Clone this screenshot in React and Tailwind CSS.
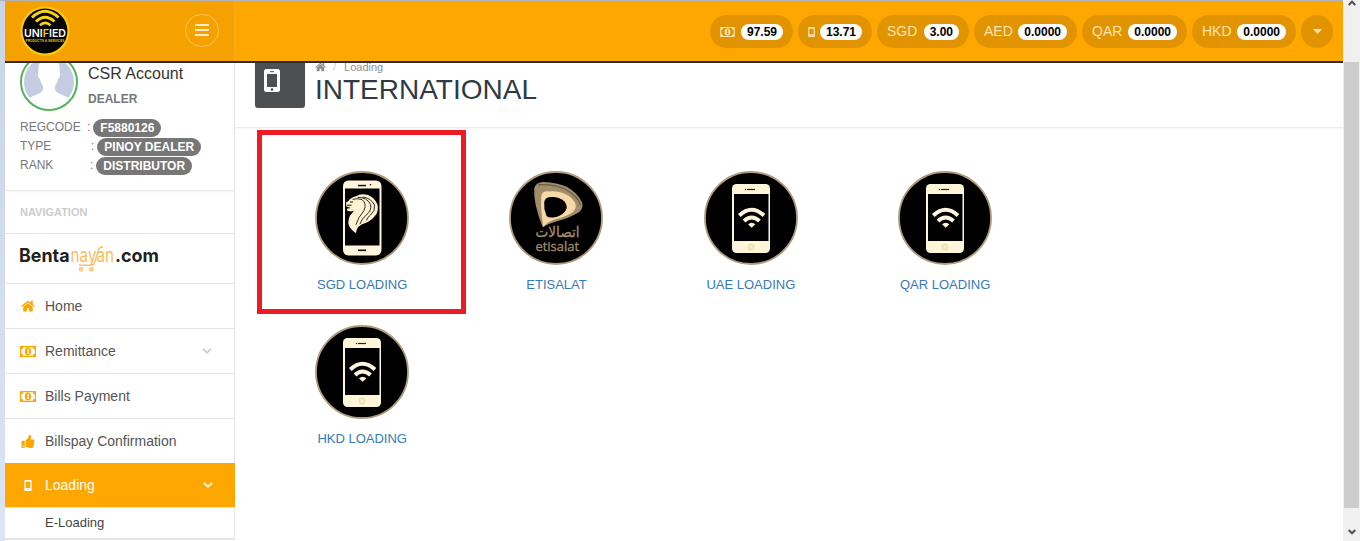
import React from "react";
import { FaThumbsUp } from "react-icons/fa";

const HomeIcon = ({ className }) => (
  <svg viewBox="50 180 1692 1400" className={className} fill="currentColor">
    <path d="M1472 992v480q0 26-19 45t-45 19h-384v-384h-256v384h-384q-26 0-45-19t-19-45v-480q0-1 .5-3t.5-3l575-474 575 474q1 2 1 6zm223-69l-62 74q-8 9-21 11h-3q-13 0-21-7l-692-577-692 577q-12 8-24 7-13-2-21-11l-62-74q-8-10-7-23.5t11-21.5l719-599q32-26 76-26t76 26l244 204v-195q0-14 9-23t23-9h192q14 0 23 9t9 23v408l219 182q10 8 11 21.5t-7 23.5z" />
  </svg>
);

const MoneyIcon = ({ className, digit = "fill-white" }) => (
  <svg viewBox="0 0 16 11" className={className} fill="currentColor">
    <path
      fillRule="evenodd"
      d="M.5 0h15q.5 0 .5.5v10q0 .5-.5.5h-15q-.5 0-.5-.5v-10q0-.5.5-.5ZM3.300 1.200Q3.200 3.200 1.200 3.300v4.400q2 .1 2.100 2.100h9.400q.1-2 2.100-2.100V3.300q-2-.1-2.100-2.100Z"
    />
    <ellipse cx="8" cy="5.500" rx="3.200" ry="3.900" />
    <path d="M7 4 8 3.100h.8v3.800h.7v.8H6.700v-.8h1V4.600l-.5.300Z" className={digit} />
  </svg>
);

const PhoneIcon = ({ className }) => (
  <svg viewBox="0 0 8 12" className={className} fill="currentColor">
    <path
      fillRule="evenodd"
      d="M1 0h6Q8 0 8 1v10Q8 12 7 12H1Q0 12 0 11V1Q0 0 1 0ZM1.500 2v6.800h5V2ZM4 9.800a.6.6 0 1 0 0 1.200.6.6 0 1 0 0-1.200Z"
    />
  </svg>
);

const Chevron = ({ className }) => (
  <svg viewBox="0 0 10 6" className={className} fill="none" stroke="currentColor" strokeWidth="1.700">
    <path d="M1 .8 5 4.800 9 .8" />
  </svg>
);

const UnifiedLogo = () => (
  <svg viewBox="0 0 50 50" className="h-[50px] w-[50px]">
    <circle cx="25" cy="25" r="23.500" fill="#050505" stroke="#fbc80a" strokeWidth="2.200" />
    <g fill="none" stroke="#fbd50f" strokeWidth="2.700">
      <path d="M12 11.500Q25-1 38.500 11.500" />
      <path d="M16 15.500Q25 7 34.500 15.500" />
      <path d="M20 19.200Q25 14.700 30.500 19.200" />
    </g>
    <text x="4" y="31.300" fontFamily="Inter, sans-serif" fontSize="10.500" fontWeight="600" fill="#fff" textLength="42" lengthAdjust="spacingAndGlyphs">
      UNI<tspan fill="#fbc80a">F</tspan>IED
    </text>
    <text x="5.500" y="35.700" fontFamily="Liberation Sans, sans-serif" fontSize="4.400" fontWeight="700" fill="#f0c20a" textLength="39" lengthAdjust="spacingAndGlyphs">
      PRODUCTS &amp; SERVICES
    </text>
  </svg>
);

const Avatar = () => (
  <div className="h-[58px] w-[58px] shrink-0 overflow-hidden rounded-full border-2 border-[#53b35b] bg-white p-[2px]">
    <svg viewBox="0 0 50 50" className="h-full w-full rounded-full">
      <rect width="50" height="50" fill="#c3cce0" />
      <path
        fill="#fff"
        d="M25 2C16 2 13.500 8 14.500 15c-1.500 1-.5 6 1.500 7 .8 4 2 5.500 3 7 .5 4-.5 6-4 7.500C9 39 6 40 3 44v6h44v-6c-3-4-6-5-12-7.500-3.500-1.500-4.500-3.500-4-7.500 1-1.500 2.200-3 3-7 2-1 3-6 1.500-7C36.500 8 34 2 25 2Z"
      />
    </svg>
  </div>
);

const BentanayanLogo = () => (
  <svg viewBox="0 0 142 30" className="h-[30px] w-[142px]">
    <g fontFamily="Inter, sans-serif" fontSize="18.500">
      <text x="0" y="19" fontWeight="700" fill="#231f20" textLength="50.500" lengthAdjust="spacingAndGlyphs">Benta</text>
      <text x="51.500" y="19" fill="#fbbd5c" textLength="43.500" lengthAdjust="spacingAndGlyphs">nayan</text>
      <text x="96" y="19" fontWeight="700" fill="#231f20" textLength="44" lengthAdjust="spacingAndGlyphs">.com</text>
    </g>
    <g fill="none" stroke="#fbc36a" strokeWidth="1.500">
      <path d="M60 22.300h12q3 0 3.600-2.500L79.500 7Q80.500 3.500 84 3.700" />
      <circle cx="62" cy="26.300" r="1.500" />
      <circle cx="72.500" cy="26.300" r="1.500" />
    </g>
  </svg>
);

const Disc = ({ children }) => (
  <svg viewBox="0 0 94 94" className="h-[94px] w-[94px]">
    <circle cx="47" cy="47" r="46" fill="#000" stroke="#ad9b7c" strokeWidth="1.800" />
    {children}
  </svg>
);

const LionPhone = () => (
  <Disc>
    <rect x="28" y="9.500" width="38.500" height="75" rx="5.500" fill="#fff5dc" />
    <rect x="30" y="17.500" width="34.500" height="57" fill="#000" />
    <rect x="43" y="13.800" width="8" height="1.500" fill="#111" />
    <circle cx="55.500" cy="13.800" r=".8" fill="#111" />
    <rect x="43" y="78.500" width="8" height="1.600" fill="#111" />
    <path
      fill="#fff3d4"
      d="M31 31.500 33.500 30l1.500-2 3.500-2 3-1q3.500-2 7-1.700 5 .3 8.200 2.700 4.500 3.500 6 8.500.6 5-1 8-3.700 6-10 9-5 1.500-8.400 4.200Q41.500 58 41 62.300 33.500 57 33.300 52q0-4 1.500-7 2.500-3 4.200-5.500l-3 1-3.700-.8-.5-2 4-.8-4.500-1.500Z"
    />
    <g fill="none" stroke="#17130d" strokeWidth=".9" strokeLinecap="round">
      <path d="M38 28.300q4-1.300 9 .2 5 4 2 11-6 7-8 14" />
      <path d="M43 26.300q9 0 12.500 7 1.500 6-4 10.500-5 4-6.500 9" />
      <path d="M48 26q8 1 11.500 8 1 6-4 10-3 2-4 5" />
    </g>
    <path d="M32 34.300h4.500M35 31h3" stroke="#17130d" strokeWidth="1.100" />
  </Disc>
);

const WifiPhone = () => (
  <Disc>
    <rect x="28" y="13" width="38" height="69" rx="4.500" fill="#fff5d8" />
    <rect x="30" y="23" width="34.500" height="47" fill="#000" />
    <path d="M43 18.500h8" stroke="#222" strokeWidth="1.200" />
    <circle cx="41.500" cy="18.500" r=".7" fill="#222" />
    <circle cx="47" cy="76" r="3" fill="none" stroke="#ead7a4" strokeWidth="1" />
    <rect x="45.700" y="74.700" width="2.600" height="2.600" rx=".5" fill="none" stroke="#ead7a4" strokeWidth=".7" />
    <g fill="none" stroke="#fff5dc" strokeWidth="3.900">
      <path d="M35.300 44.500Q47.500 33 60 44.500" />
      <path d="M40 50Q47.500 43 55.500 50" />
    </g>
    <path fill="#fff5dc" d="M44 53.300q3.700-3 7.400 0L47.700 56.800Z" />
  </Disc>
);

const Etisalat = () => (
  <Disc>
    <path fill="#a18d6a" d="M25.300 17Q27 11 34.500 11 48 11.500 58 16 69 22 73.300 32q1.500 7-5.600 10.500-8 4.500-19 7.500-9 2.500-15 6.300Q24 32 25.300 17Z" />
    <path fill="none" stroke="#6b5d43" strokeWidth="1.200" d="M29 13.800Q46 13 57.500 19 69 25.500 71.500 34" />
    <path fill="#f5d9a7" d="M32.500 24q1-4 7-3.600Q52 19.500 60 25q7.500 6 6.800 11-1 4.500-6 7-6 3.500-14.800 5.500-7 2-11.700 7.200Q31 35 32.500 24Z" />
    <path fill="#000" d="M35.200 31q1-4.800 6.300-5 9-.6 14 4.500 3.500 4.500 1.500 8.500-4 6.500-13 7.500-4.500.3-6.500-1.500Q34.500 38 35.200 31Z" />
    <text x="48.500" y="65.500" textAnchor="middle" direction="rtl" fontFamily="DejaVu Sans, sans-serif" fontSize="14" fill="#a18d6a" stroke="#a18d6a" strokeWidth=".3" textLength="44" lengthAdjust="spacingAndGlyphs">اتصالات</text>
    <text x="26.500" y="80.300" fontFamily="Open Sans, sans-serif" fontSize="12.500" fontWeight="500" fill="#a18d6a" stroke="#a18d6a" strokeWidth=".3" textLength="43.500" lengthAdjust="spacingAndGlyphs">etisalat</text>
  </Disc>
);

const Pill = ({ label, value, className }) => (
  <div className={`flex h-[33px] items-center justify-between rounded-full bg-[#e29400] px-[10px] text-[14px] text-[#fce3b1] ${className}`}>
    <span>{label}</span>
    <span className="flex h-4 items-center rounded-full bg-white px-[6px] text-[12px] font-bold leading-none text-black">{value}</span>
  </div>
);

const InfoRow = ({ label, value, className }) => (
  <div className="flex h-[19px] items-start text-[12px] leading-[17px] text-[#777]">
    <span className={className}>{label}</span>
    <span>:</span>
    <span className="ml-[3px] h-[18px] rounded-full bg-[#777] px-[7px] font-bold leading-[18px] text-white">{value}</span>
  </div>
);

const NavItem = ({ icon, label, open }) => (
  <div className="flex h-[45px] shrink-0 items-center border-b border-r border-[#e3e5e7] pl-[15px] pr-[22px] text-[14px] text-[#555]">
    <span className="flex w-[25px] text-[#fca600]">{icon}</span>
    <span className="flex-1">{label}</span>
    {open && <Chevron className="h-[6px] w-[10px] text-[#ccc]" />}
  </div>
);

const Tile = ({ icon, label }) => (
  <div className="flex h-[154px] flex-col items-center text-[13px] text-[#337ab7]">
    {icon}
    <span className="mt-[10px] leading-5">{label}</span>
  </div>
);

export default function App() {
  return (
    <div className="flex h-[541px] w-[1360px] overflow-hidden bg-white font-['Liberation_Sans',Arial,sans-serif]">
      <div className="w-[5px] shrink-0 border-t border-[#b3b3b3] bg-linear-to-b from-[#c9d4e7] to-[#dbe5f3]" />

      <div className="flex w-[1338px] shrink-0 flex-col">
        <header className="flex h-[63px] shrink-0 border-b-2 border-t border-b-[#2d2d2d] border-t-[#b3b3b3] bg-[#fda700]">
          <div className="flex w-[230px] items-start justify-between border-r border-[#f9ad1c] bg-[#f5a200] pl-[15px] pr-[15px] pt-[5px]">
            <UnifiedLogo />
            <div className="mt-[8px] flex h-[33px] w-[34px] flex-col items-center justify-center gap-[3px] rounded-full border border-[#fac25a] pb-[2px]">
              <span className="h-[2px] w-[14px] bg-[#fdebc9]" />
              <span className="h-[2px] w-[14px] bg-[#fdebc9]" />
              <span className="h-[2px] w-[14px] bg-[#fdebc9]" />
            </div>
          </div>
          <div className="flex flex-1 justify-end gap-[5px] pr-[10px] pt-[14px]">
            <Pill className="w-[83px]" label={<MoneyIcon className="h-[10px] w-[15px]" digit="fill-[#e29400]" />} value="97.59" />
            <Pill className="w-[74px]" label={<PhoneIcon className="h-[10px] w-[7px]" />} value="13.71" />
            <Pill className="w-[92px]" label="SGD" value="3.00" />
            <Pill className="w-[103px]" label="AED" value="0.0000" />
            <Pill className="w-[105px]" label="QAR" value="0.0000" />
            <Pill className="w-[104px]" label="HKD" value="0.0000" />
            <div className="flex h-[33px] w-[32px] items-center justify-center rounded-full bg-[#e29400]">
              <svg viewBox="0 0 9 5" className="h-[5px] w-[9px]" fill="#fce3b1">
                <path d="M0 0h9L4.500 5Z" />
              </svg>
            </div>
          </div>
        </header>

        <div className="flex min-h-0 flex-1">
          <aside className="flex w-[230px] shrink-0 flex-col">
            <div className="h-[128px] shrink-0 overflow-hidden border-b border-r border-[#e6e8ea] pl-[15px] shadow-[0_1px_2px_rgba(0,0,0,0.04)]">
              <div className="-mt-[10px] flex h-[65px]">
                <Avatar />
                <div className="ml-[10px] pt-[11px]">
                  <div className="text-[16px] leading-5 text-[#333]">CSR Account</div>
                  <div className="mt-[7px] text-[12px] font-bold leading-4 text-[#777]">DEALER</div>
                </div>
              </div>
              <div className="pt-[1px]">
                <InfoRow className="w-[67px]" label="REGCODE" value="F5880126" />
                <InfoRow className="w-[71px]" label="TYPE" value="PINOY DEALER" />
                <InfoRow className="w-[70px]" label="RANK" value="DISTRIBUTOR" />
              </div>
            </div>
            <div className="flex h-[43px] shrink-0 items-center border-b border-r border-[#e3e5e7] pl-[15px] text-[11px] font-bold text-[#ccc]">NAVIGATION</div>
            <div className="flex h-[50px] shrink-0 items-start border-b border-r border-[#e3e5e7] pl-[14px] pt-[9px]">
              <BentanayanLogo />
            </div>
            <NavItem icon={<HomeIcon className="ml-px h-[12px] w-[14px]" />} label="Home" />
            <NavItem icon={<MoneyIcon className="h-[11px] w-[16px]" />} label="Remittance" open />
            <NavItem icon={<MoneyIcon className="h-[11px] w-[16px]" />} label="Bills Payment" />
            <NavItem icon={<FaThumbsUp className="ml-px h-[13px] w-[14px]" />} label="Billspay Confirmation" />
            <div className="-mt-px flex h-[44px] w-[230px] shrink-0 items-center bg-[#fda700] pl-[15px] pr-[22px] text-[14px] text-white">
              <span className="flex w-[25px] pl-[4px]">
                <PhoneIcon className="h-[11px] w-[8px]" />
              </span>
              <span className="flex-1">Loading</span>
              <Chevron className="h-[6px] w-[10px]" />
            </div>
            <div className="flex h-[33px] shrink-0 items-center border-b-2 border-r border-t border-b-[#e1e5e9] border-r-[#e3e5e7] border-t-[#e3e5e7] pl-[40px] text-[13px] text-[#444]">E-Loading</div>
          </aside>

          <main className="relative flex-1">
            <div className="flex h-[65px] border-b border-[#ececec] pl-[20px] shadow-[0_1px_2px_rgba(0,0,0,0.04)]">
              <div className="flex h-[45px] w-[50px] rounded-b-[3px] bg-[#4c5052] pl-[9px] pt-[6px]">
                <svg viewBox="0 0 16 23" className="h-[23px] w-[16px]">
                  <rect width="16" height="23" rx="2.500" fill="#fff" />
                  <rect x="3" y="5" width="10" height="13" fill="#4c5052" />
                  <path d="M6 2.700h4" stroke="#4c5052" />
                  <circle cx="8" cy="20.500" r="1.300" fill="#4c5052" />
                </svg>
              </div>
              <div className="ml-[10px]">
                <div className="-mt-[3px] flex h-[14px] items-center text-[11px] leading-[14px] text-[#8e8e8e]">
                  <HomeIcon className="h-[10px] w-[11px]" />
                  <span className="ml-[7px] text-[#ccc]">/</span>
                  <span className="ml-[8px]">Loading</span>
                </div>
                <h1 className="text-[28px] leading-[32px] text-[#2f3a43]">INTERNATIONAL</h1>
              </div>
            </div>
            <div className="grid grid-cols-[repeat(4,194.33px)] pl-[30px] pt-[43px]">
              <Tile icon={<LionPhone />} label="SGD LOADING" />
              <Tile icon={<Etisalat />} label="ETISALAT" />
              <Tile icon={<WifiPhone />} label="UAE LOADING" />
              <Tile icon={<WifiPhone />} label="QAR LOADING" />
              <Tile icon={<WifiPhone />} label="HKD LOADING" />
            </div>
            <div className="absolute left-[22px] top-[67px] h-[184px] w-[209px] border-[5px] border-[#ed1c24]" />
          </main>
        </div>
      </div>

      <div className="flex w-[17px] shrink-0 flex-col items-center bg-[#f0f0f0]">
        <div className="flex h-[62px] w-full justify-center">
          <svg viewBox="0 0 8 6" className="h-[6px] w-[8px]" fill="none" stroke="#505050" strokeWidth="2">
            <path d="M.7 5 4 1.700 7.300 5" />
          </svg>
        </div>
        <div className="h-[446px] w-[15px] bg-[#cdcdcd]" />
        <svg viewBox="0 0 8 6" className="mt-[21px] h-[6px] w-[8px]" fill="none" stroke="#505050" strokeWidth="2">
          <path d="M.7 1 4 4.300 7.300 1" />
        </svg>
      </div>
    </div>
  );
}
